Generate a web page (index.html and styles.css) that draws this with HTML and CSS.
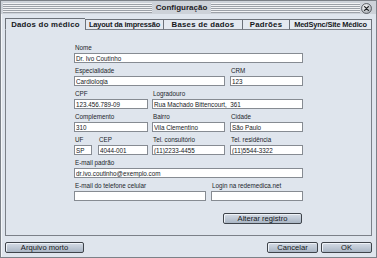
FILE: index.html
```html
<!DOCTYPE html>
<html lang="pt-BR">
<head>
  <meta charset="UTF-8">
  <title>Configuração</title>
  <link rel="stylesheet" href="styles.css">
</head>
<body>
  <div class="window">
    <div class="titlebar">
      <span class="stripes"></span>
      <span class="title">Configuração</span>
      <span class="stripes"></span>
      <span class="close">
        <svg width="11" height="11" viewBox="0 0 11 11">
          <defs>
            <radialGradient id="g" cx="0.4" cy="0.35" r="0.7">
              <stop offset="0" stop-color="#ffffff"/>
              <stop offset="1" stop-color="#9aa0a8"/>
            </radialGradient>
          </defs>
          <circle cx="5.5" cy="5.5" r="5" fill="url(#g)" stroke="#4a4e54" stroke-width="0.8"/>
          <path d="M3.6 3.6 L7.4 7.4 M7.4 3.6 L3.6 7.4" stroke="#1f2226" stroke-width="1.3" stroke-linecap="round"/>
        </svg>
      </span>
    </div>

    <div class="tabs">
      <div class="tab active t1">Dados do médico</div>
      <div class="tab t2 narrow">Layout da impressão</div>
      <div class="tab t3">Bases de dados</div>
      <div class="tab t4">Padrões</div>
      <div class="tab t5 narrow">MedSync/Site Médico</div>
    </div>

    <div class="panel">
      <div class="form">
        <div class="row">
          <div class="field full"><label>Nome</label><input type="text" value="Dr. Ivo Coutinho"></div>
        </div>
        <div class="row">
          <div class="field w151"><label>Especialidade</label><input type="text" value="Cardiologia"></div>
          <div class="field w73 gap5"><label>CRM</label><input type="text" value="123"></div>
        </div>
        <div class="row">
          <div class="field w74"><label>CPF</label><input type="text" value="123.456.789-09"></div>
          <div class="field w151 gap4"><label>Logradouro</label><input type="text" value="Rua Machado Bittencourt,  361"></div>
        </div>
        <div class="row">
          <div class="field w74"><label>Complemento</label><input type="text" value="310"></div>
          <div class="field w73 gap4"><label>Bairro</label><input type="text" value="Vila Clementino"></div>
          <div class="field w73 gap5"><label>Cidade</label><input type="text" value="São Paulo"></div>
        </div>
        <div class="row">
          <div class="field w18"><label>UF</label><input type="text" value="SP"></div>
          <div class="field w50 gap6"><label>CEP</label><input type="text" value="4044-001"></div>
          <div class="field w73 gap4"><label>Tel. consultório</label><input type="text" value="(11)2233-4455"></div>
          <div class="field w73 gap5"><label>Tel. residência</label><input type="text" value="(11)5544-3322"></div>
        </div>
        <div class="row">
          <div class="field full"><label>E-mail padrão</label><input type="text" value="dr.ivo.coutinho@exemplo.com"></div>
        </div>
        <div class="row">
          <div class="field w132"><label>E-mail do telefone celular</label><input type="text" value=""></div>
          <div class="field w92 gap5"><label>Login na redemedica.net</label><input type="text" value=""></div>
        </div>
        <div class="actions">
          <button class="btn alter">Alterar registro</button>
        </div>
      </div>
    </div>

    <div class="footer">
      <button class="btn archive">Arquivo morto</button>
      <div class="footer-right">
        <button class="btn small">Cancelar</button>
        <button class="btn small">OK</button>
      </div>
    </div>
  </div>
</body>
</html>
```

FILE: styles.css
```css
* {
  box-sizing: border-box;
}
body {
  margin: 0;
  font-family: "Liberation Sans", Arial, sans-serif;
  background: #dfe5ed;
}
.window {
  width: 377px;
  height: 258px;
  border: 1px solid #7c8188;
  box-shadow: inset 1px 1px 0 #f4f6f9;
  background: #dfe5ed;
}
.titlebar {
  height: 13px;
  display: flex;
  align-items: center;
  padding: 1px 2px 0 2px;
  background: #cdd2d9;
}
.stripes {
  flex: 1;
  height: 10px;
  background: repeating-linear-gradient(to bottom, #f2f3f5 0, #f2f3f5 1px, #9ca1a8 1px, #9ca1a8 2px);
}
.title {
  font-size: 8px;
  font-weight: bold;
  color: #1e2126;
  padding: 0 4px;
  line-height: 10px;
}
.close {
  display: flex;
  margin-left: 1px;
  margin-right: 2px;
}
.tabs {
  display: flex;
  margin: 4px 4px -1px 4px;
  height: 12px;
  position: relative;
}
.tab {
  height: 11px;
  border: 1px solid #6c7179;
  border-right: none;
  border-bottom: 1px solid #7b8088;
  background: #e4e9f0;
  font-size: 7.8px;
  font-weight: bold;
  letter-spacing: 0.25px;
  color: #15181c;
  text-align: center;
  line-height: 10px;
  margin-top: 1px;
  white-space: nowrap;
  overflow: hidden;
}
.tab.narrow {
  font-size: 7.4px;
  letter-spacing: -0.15px;
}
.tab.active {
  height: 12px;
  margin-top: 0;
  border-bottom: 1px solid #dfe5ed;
  background: #dfe5ed;
  line-height: 11px;
}
.t1 { width: 80px; }
.t2 { width: 78px; }
.t3 { width: 79px; }
.t4 { width: 47px; }
.t5 { width: 83px; border-right: 1px solid #6c7179; }
.panel {
  margin: 0 4px;
  height: 207px;
  border: 1px solid #7b8088;
  padding: 13px 0 0 68px;
}
.form {
  width: 229px;
  display: flex;
  flex-direction: column;
  gap: 3px;
}
.row {
  display: flex;
}
.field {
  display: flex;
  flex-direction: column;
}
.field label {
  font-size: 6.3px;
  line-height: 9px;
  height: 9px;
  margin-bottom: 1px;
  padding-left: 1px;
  color: #22262b;
  white-space: nowrap;
}
.field input {
  height: 10px;
  width: 100%;
  margin: 0;
  border: 1px solid #868b92;
  background: #fff;
  font-family: "Liberation Sans", Arial, sans-serif;
  font-size: 6.3px;
  color: #15181c;
  padding: 0 1px;
  outline: none;
}
.full { width: 229px; }
.w151 { width: 151px; }
.w74 { width: 74px; }
.w73 { width: 73px; }
.w18 { width: 18px; }
.w50 { width: 50px; }
.w132 { width: 132px; }
.w92 { width: 92px; }
.gap4 { margin-left: 4px; }
.gap5 { margin-left: 5px; }
.gap6 { margin-left: 6px; }
.actions {
  display: flex;
  justify-content: flex-end;
  margin-top: 9px;
  padding-right: 1px;
}
.btn {
  height: 11px;
  border: 1px solid #3f444b;
  border-radius: 2px;
  background: linear-gradient(to bottom, #d5dce6, #a9b5c4);
  box-shadow: inset 1px 1px 0 #eef2f7;
  font-family: "Liberation Sans", Arial, sans-serif;
  font-size: 7.6px;
  color: #15181c;
  padding: 0;
  line-height: 9px;
}
.alter { width: 79px; }
.footer {
  display: flex;
  justify-content: space-between;
  padding: 6px 4px 0 4px;
}
.archive { width: 79px; }
.footer-right {
  display: flex;
  gap: 3px;
}
.small { width: 51px; }
```
